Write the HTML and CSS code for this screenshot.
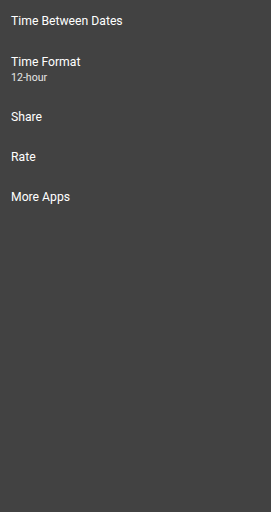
FILE: index.html
```html
<!DOCTYPE html>
<html>
<head>
<meta charset="utf-8">
<link rel="stylesheet" href="styles.css">
</head>
<body>
<div class="list">
  <div class="item"><div class="title">Time Between Dates</div></div>
  <div class="item two"><div class="title">Time Format</div><div class="summary">12-hour</div></div>
  <div class="item"><div class="title">Share</div></div>
  <div class="item"><div class="title">Rate</div></div>
  <div class="item"><div class="title">More Apps</div></div>
</div>
</body>
</html>
```
FILE: styles.css
```css
html, body {
  margin: 0;
  padding: 0;
  background: #424242;
  height: 100%;
}
body {
  font-family: Roboto, "Noto Sans", sans-serif;
  color: #ffffff;
}
.list {
  display: flex;
  flex-direction: column;
  padding-top: 1px;
}
.item {
  height: 40px;
  padding: 0 11px;
  display: flex;
  flex-direction: column;
  justify-content: center;
}
.item.two {
  height: 56px;
}
.title {
  font-size: 12.2px;
  line-height: 16px;
}
.summary {
  font-size: 10.6px;
  line-height: 15px;
  color: #e6e6e6;
}
```
